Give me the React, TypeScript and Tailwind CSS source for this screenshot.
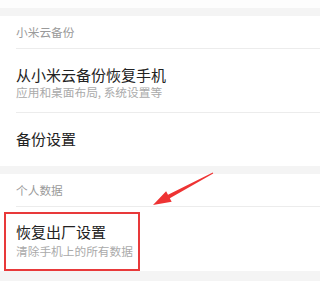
const font = { fontFamily: '"Noto Sans CJK SC", "Noto Sans", sans-serif' };

function Header({ label }: { label: string }) {
  return (
    <div className="ml-4 flex h-[33px] items-center border-b border-[#ececec] text-[11.7px] text-[#9a9a9a]">
      {label}
    </div>
  );
}

export default function App() {
  return (
    <main className="relative h-[281px] w-full overflow-hidden bg-white" style={font}>
      <div className="h-[8px] bg-[#fdfdfd]" />
      <div className="h-[8px] bg-[#f4f4f4]" />

      <section className="bg-white">
        <Header label="小米云备份" />
        <div className="ml-4 border-b border-[#ececec] pt-[18px] pb-[13px]">
          <p className="text-[15px] leading-[16px] text-[#222]">从小米云备份恢复手机</p>
          <p className="mt-[2px] text-[11.7px] leading-[14px] text-[#aaa]">应用和桌面布局, 系统设置等</p>
        </div>
        <div className="flex h-[53px] items-center pl-4 text-[15px] text-[#222]">备份设置</div>
      </section>

      <div className="h-[8px] bg-[#f4f4f4]" />

      <section className="relative bg-white">
        <Header label="个人数据" />
        <div className="pl-4 pt-[17px] pb-[13px]">
          <p className="text-[15px] leading-[16px] text-[#222]">恢复出厂设置</p>
          <p className="mt-[4px] text-[11.7px] leading-[14px] text-[#aaa]">清除手机上的所有数据</p>
        </div>
        <div className="absolute left-[4px] top-[38px] h-[59px] w-[136px] border-2 border-[#e8393a]" />
      </section>

      <div className="h-[12px] bg-[#f4f4f4]" />

      <svg className="absolute left-0 top-0" width="256" height="281" viewBox="0 0 256 281">
        <polygon
          points="153,205 171.7,201.8 169.8,198.3 213.2,173.4 212.8,172.6 168,194.7 166.1,191.2"
          fill="#ee3333"
        />
      </svg>
    </main>
  );
}
